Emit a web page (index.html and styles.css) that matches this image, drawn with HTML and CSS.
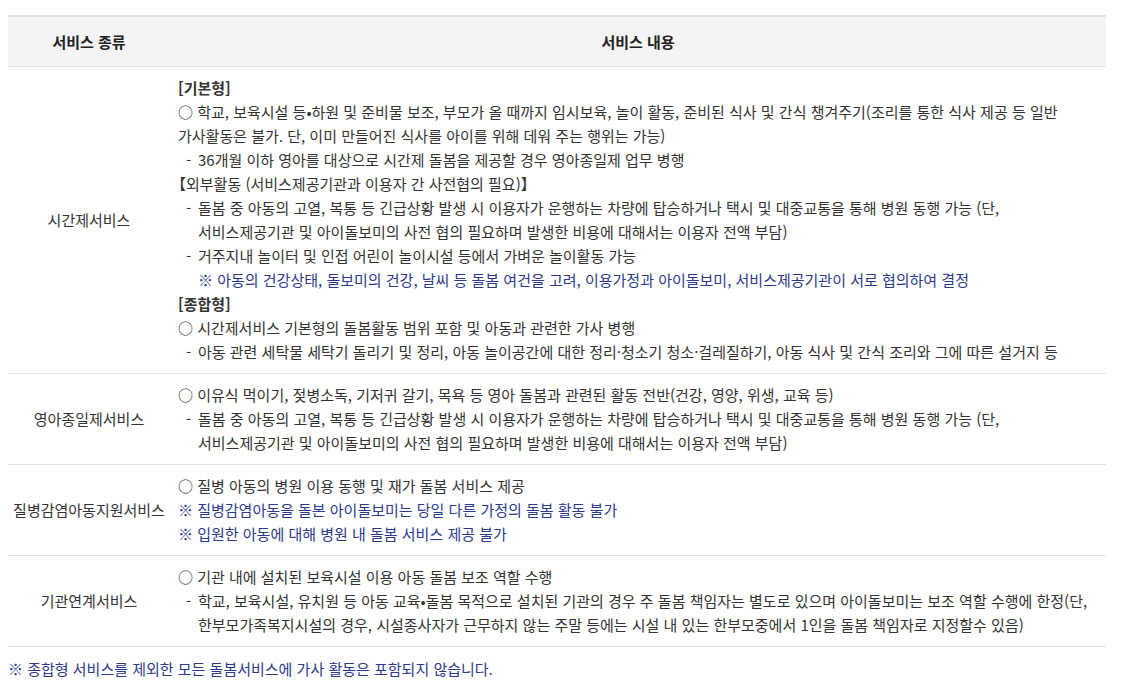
FILE: index.html
```html
<!DOCTYPE html>
<html lang="ko">
<head>
    <meta charset="UTF-8">
    <meta name="viewport" content="width=device-width, initial-scale=1.0">
    <title>서비스 종류</title>
    <link rel="stylesheet" href="styles.css">
</head>
<body>
    <div class="wrap">
        <table class="svc">
            <thead>
                <tr>
                    <th class="col-type">서비스 종류</th>
                    <th>서비스 내용</th>
                </tr>
            </thead>
            <tbody>
                <tr>
                    <td class="type">시간제서비스</td>
                    <td class="desc">
                        <div class="head">[기본형]</div>
                        <div>○ 학교, 보육시설 등•하원 및 준비물 보조, 부모가 올 때까지 임시보육, 놀이 활동, 준비된 식사 및 간식 챙겨주기(조리를 통한 식사 제공 등 일반<br>가사활동은 불가. 단, 이미 만들어진 식사를 아이를 위해 데워 주는 행위는 가능)</div>
                        <div class="dash"><span class="mk">-</span><span>36개월 이하 영아를 대상으로 시간제 돌봄을 제공할 경우 영아종일제 업무 병행</span></div>
                        <div class="bracket">【외부활동 (서비스제공기관과 이용자 간 사전협의 필요)】</div>
                        <div class="dash"><span class="mk">-</span><span>돌봄 중 아동의 고열, 복통 등 긴급상황 발생 시 이용자가 운행하는 차량에 탑승하거나 택시 및 대중교통을 통해 병원 동행 가능 (단,<br>서비스제공기관 및 아이돌보미의 사전 협의 필요하며 발생한 비용에 대해서는 이용자 전액 부담)</span></div>
                        <div class="dash"><span class="mk">-</span><span>거주지내 놀이터 및 인접 어린이 놀이시설 등에서 가벼운 놀이활동 가능</span></div>
                        <div class="note indent">※ 아동의 건강상태, 돌보미의 건강, 날씨 등 돌봄 여건을 고려, 이용가정과 아이돌보미, 서비스제공기관이 서로 협의하여 결정</div>
                        <div class="head">[종합형]</div>
                        <div>○ 시간제서비스 기본형의 돌봄활동 범위 포함 및 아동과 관련한 가사 병행</div>
                        <div class="dash"><span class="mk">-</span><span>아동 관련 세탁물 세탁기 돌리기 및 정리, 아동 놀이공간에 대한 정리·청소기 청소·걸레질하기, 아동 식사 및 간식 조리와 그에 따른 설거지 등</span></div>
                    </td>
                </tr>
                <tr>
                    <td class="type">영아종일제서비스</td>
                    <td class="desc">
                        <div>○ 이유식 먹이기, 젖병소독, 기저귀 갈기, 목욕 등 영아 돌봄과 관련된 활동 전반(건강, 영양, 위생, 교육 등)</div>
                        <div class="dash"><span class="mk">-</span><span>돌봄 중 아동의 고열, 복통 등 긴급상황 발생 시 이용자가 운행하는 차량에 탑승하거나 택시 및 대중교통을 통해 병원 동행 가능 (단,<br>서비스제공기관 및 아이돌보미의 사전 협의 필요하며 발생한 비용에 대해서는 이용자 전액 부담)</span></div>
                    </td>
                </tr>
                <tr>
                    <td class="type">질병감염아동지원서비스</td>
                    <td class="desc">
                        <div>○ 질병 아동의 병원 이용 동행 및 재가 돌봄 서비스 제공</div>
                        <div class="note">※ 질병감염아동을 돌본 아이돌보미는 당일 다른 가정의 돌봄 활동 불가</div>
                        <div class="note">※ 입원한 아동에 대해 병원 내 돌봄 서비스 제공 불가</div>
                    </td>
                </tr>
                <tr>
                    <td class="type">기관연계서비스</td>
                    <td class="desc">
                        <div>○ 기관 내에 설치된 보육시설 이용 아동 돌봄 보조 역할 수행</div>
                        <div class="dash"><span class="mk">-</span><span>학교, 보육시설, 유치원 등 아동 교육•돌봄 목적으로 설치된 기관의 경우 주 돌봄 책임자는 별도로 있으며 아이돌보미는 보조 역할 수행에 한정(단,<br>한부모가족복지시설의 경우, 시설종사자가 근무하지 않는 주말 등에는 시설 내 있는 한부모중에서 1인을 돌봄 책임자로 지정할수 있음)</span></div>
                    </td>
                </tr>
            </tbody>
        </table>
        <p class="foot">※ 종합형 서비스를 제외한 모든 돌봄서비스에 가사 활동은 포함되지 않습니다.</p>
    </div>
</body>
</html>
```

FILE: styles.css
```css
body { margin: 0; font-family: "Noto Sans CJK KR", "Noto Sans", sans-serif; font-size: 15px; color: #333; background: #fff; }
.wrap { padding: 15px 0 0 8px; width: 1098px; }
.svc { width: 100%; border-collapse: collapse; border-top: 2px solid #e2e2e2; }
.svc th { background: #f4f4f4; color: #222; font-weight: bold; height: 49px; padding: 0; text-align: center; border-bottom: 1px solid #e2e2e2; }
.svc .col-type { width: 162px; }
.svc td { border-bottom: 1px solid #e2e2e2; line-height: 24px; padding: 9px 0 9px; }
.type { text-align: center; vertical-align: middle; white-space: nowrap; }
.desc { padding-left: 8px !important; text-align: left; }
.head { font-weight: bold; }
.dash { display: flex; padding-left: 8px; }
.dash .mk { width: 12px; flex: none; }
.bracket { margin-left: -7px; }
.note { color: #2b3a8c; }
.indent { padding-left: 20px; }
.foot { margin: 10px 0 0; line-height: 24px; color: #2b3a8c; }
```
